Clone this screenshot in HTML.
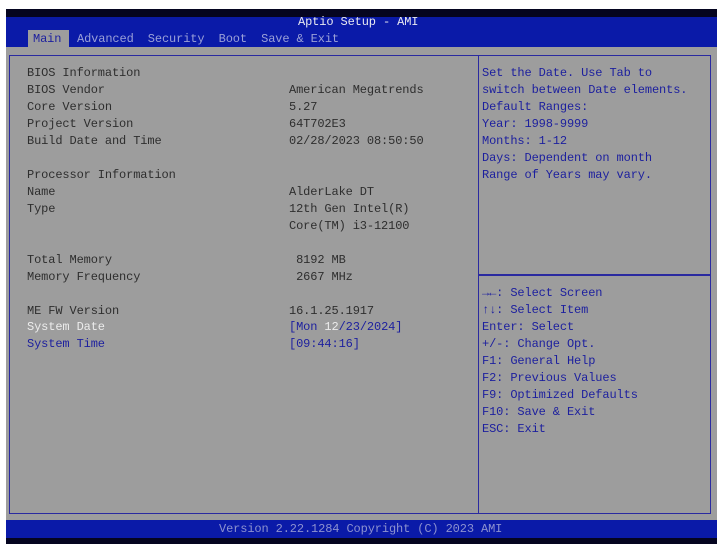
<!DOCTYPE html>
<html><head><meta charset="utf-8"><style>
html,body{margin:0;padding:0;width:722px;height:549px;background:#fff;overflow:hidden}
#s{position:absolute;left:6px;top:9px;width:711px;height:535px;background:#9d9d9d}
.a{position:absolute;font-family:"Liberation Mono","DejaVu Sans Mono",monospace;font-size:12px;letter-spacing:-0.12px;line-height:17px;white-space:pre;color:#2e2e2e}
.b{color:#1c1f9e}.w{color:#ececec}
</style></head><body>
<div id="s"></div>
<div style="position:absolute;left:6px;top:9px;width:711px;height:8px;background:#050520"></div>
<div style="position:absolute;left:6px;top:17px;width:711px;height:30px;background:#0a1aa8"></div>
<div style="position:absolute;left:28px;top:30px;width:41px;height:17px;background:#9d9d9d"></div>
<div class="a" style="left:298px;top:14px;color:#e8e8f0">Aptio Setup - AMI</div>
<div class="a" style="left:33px;top:31px;color:#1c1f9e">Main</div>
<div class="a" style="left:77px;top:31px;color:#9aa0d8">Advanced  Security  Boot  Save &amp; Exit</div>
<div style="position:absolute;left:9px;top:55px;width:468px;height:457px;border:1.5px solid #2a2aa0"></div>
<div style="position:absolute;left:478px;top:55px;width:232px;height:457px;border:1.5px solid #2a2aa0;border-left:none"></div>
<div style="position:absolute;left:478px;top:274px;width:232px;height:1.5px;background:#2a2aa0"></div>
<div style="position:absolute;left:6px;top:520px;width:711px;height:18px;background:#0a1aa8"></div>
<div style="position:absolute;left:6px;top:538px;width:711px;height:6px;background:#050520"></div>
<div class="a" style="left:219px;top:521px;color:#8d92d0">Version 2.22.1284 Copyright (C) 2023 AMI</div>

<div class="a" style="left:27px;top:65px">BIOS Information
BIOS Vendor
Core Version
Project Version
Build Date and Time

Processor Information
Name
Type


Total Memory
Memory Frequency

ME FW Version</div>
<div class="a w" style="left:27px;top:319px">System Date</div>
<div class="a b" style="left:27px;top:336px">System Time</div>
<div class="a" style="left:289px;top:82px">American Megatrends
5.27
64T702E3
02/28/2023 08:50:50


AlderLake DT
12th Gen Intel(R)
Core(TM) i3-12100

 8192 MB
 2667 MHz

16.1.25.1917</div>
<div class="a b" style="left:289px;top:319px">[Mon <span class="w">12</span>/23/2024]
[09:44:16]</div>
<div class="a b" style="left:482px;top:65px">Set the Date. Use Tab to
switch between Date elements.
Default Ranges:
Year: 1998-9999
Months: 1-12
Days: Dependent on month
Range of Years may vary.</div>
<div class="a b" style="left:482px;top:285px">→←: Select Screen
↑↓: Select Item
Enter: Select
+/-: Change Opt.
F1: General Help
F2: Previous Values
F9: Optimized Defaults
F10: Save &amp; Exit
ESC: Exit</div>
</body></html>
